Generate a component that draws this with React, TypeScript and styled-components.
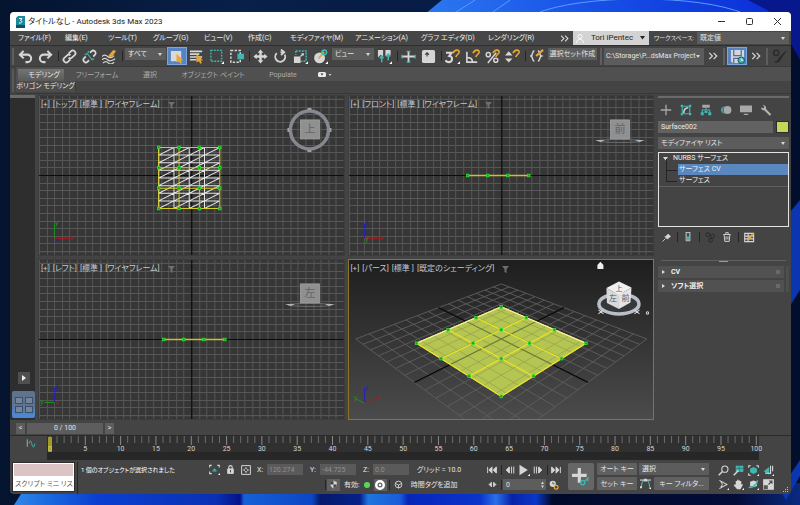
import React from "react";
import styled, { createGlobalStyle, css } from "styled-components";

const GlobalStyle = createGlobalStyle`
  * { box-sizing: border-box; }
  html, body { margin: 0; padding: 0; background: #03102a; }
  body, button, input, select {
    font-family: Roboto, "Noto Sans CJK JP", sans-serif;
    font-size: 7px;
    line-height: 12px;
    font-feature-settings: "palt";
    color: #e4e4e4;
  }
  button { padding: 0; border: 0; background: none; white-space: nowrap; }
  input, select { border: 0; border-radius: 0; margin: 0; outline: none; min-width: 0; }
`;

const TEAL = "#3fb8b4";
const LIGHT = "#d6d6d6";
const GOLD = "#e8a735";

/* ---------- shell ---------- */

const Desktop = styled.div`
  position: relative;
  min-height: 100vh;
  display: flex;
  padding: 12px 9px 11px 10px;
  overflow: hidden;
`;

const WallpaperSvg = styled.svg`
  position: absolute;
  inset: 0;
  width: 100%;
  height: 100%;
`;

const AppWindow = styled.main`
  position: relative;
  flex: 1;
  min-width: 0;
  display: flex;
  flex-direction: column;
  background: #444444;
  border-radius: 4px;
  overflow: hidden;
`;

const TitleBar = styled.header`
  display: flex;
  align-items: center;
  height: 19px;
  padding-left: 5px;
  background: #ffffff;
`;

const Title = styled.h1`
  flex: 1;
  margin: 0 0 0 2px;
  font-size: 8px;
  font-weight: 400;
  color: #222222;
`;

const CaptionButton = styled.button`
  display: grid;
  place-items: center;
  width: 28px;
  height: 19px;
`;

const MenuBar = styled.nav`
  display: flex;
  align-items: center;
  height: 14px;
  padding: 0 2px 0 8px;
  background: #464646;
`;

const MenuList = styled.div`
  flex: 1;
  display: grid;
  grid-template-columns: 47px 43px 45px 51px 44px 42px 65px 66px 67px 1fr;
`;

const MenuButton = styled.button`
  text-align: left;
  color: #ececec;
`;

const MoreButton = styled.button`
  display: grid;
  place-items: center;
  width: 18px;
  height: 14px;
`;

const UserButton = styled.button`
  display: flex;
  align-items: center;
  justify-content: space-between;
  width: 76px;
  height: 14px;
  padding: 0 4px 0 3px;
  background: #d3d3d3;
  color: #1c1c1c;
  font-size: 8px;
`;

const WorkspaceLabel = styled.label`
  width: 48px;
  padding-left: 5px;
  white-space: nowrap;
  font-size: 6px;
`;

const SelectWrap = styled.span<{ $w?: number; $h?: number }>`
  position: relative;
  display: flex;
  ${(p) => (p.$w ? css`width: ${p.$w}px;` : css`flex: 1;`)}
  height: ${(p) => p.$h ?? 12}px;
  &::after {
    content: "";
    position: absolute;
    right: 4px;
    top: calc(50% - 1px);
    border: 2px solid transparent;
    border-top: 3px solid #d8d8d8;
    border-bottom: 0;
    pointer-events: none;
  }
`;

const Select = styled.select<{ $dense?: boolean }>`
  appearance: none;
  width: 100%;
  height: 100%;
  padding: ${(p) => (p.$dense ? "0 0 0 2px" : "0 8px 0 3px")};
  background: #5c5c5c;
  line-height: 10px;
`;

/* ---------- toolbar ---------- */

const Toolbar = styled.div`
  display: flex;
  align-items: center;
  height: 21px;
  padding: 0 1px 0 2px;
  background: #444444;
  border-top: 1px solid #2f2f2f;
`;

const Grip = styled.span`
  width: 2px;
  height: 17px;
  margin-right: 2px;
  background: #5e5e5e;
`;

const ToolButton = styled.button<{ $active?: boolean }>`
  display: grid;
  place-items: center;
  flex: none;
  width: 20px;
  height: 18px;
  ${(p) =>
    p.$active &&
    css`
      background: #5583c4;
      border: 1px solid #79a6e0;
    `}
`;

const Separator = styled.span`
  flex: none;
  width: 1px;
  height: 10px;
  margin: 0 1px 0 2px;
  background: #252525;
`;

const SectionGrip = styled.span`
  flex: none;
  width: 2px;
  height: 17px;
  margin: 0 2px;
  background: #5e5e5e;
`;

const ToolSlot = styled.span`
  display: flex;
  align-self: flex-start;
  margin: 2px 1px 0;
`;

const SetButton = styled.button`
  width: 49px;
  height: 12px;
  background: #5e5e5e;
`;

const Spacer = styled.span`
  flex: 1;
`;

/* ---------- ribbon ---------- */

const Ribbon = styled.div`
  display: grid;
  grid-template-columns: 6px 1fr;
  grid-template-rows: 14px 13px;
  height: 29px;
  border-top: 1px solid #3a3a3a;
`;

const RibbonGrip = styled.span`
  grid-row: 1 / 3;
  margin: 2px 2px 2px 2px;
  background: #5a5a5a;
`;

const RibbonTabs = styled.div`
  display: grid;
  grid-template-columns: 48px 66px 40px 86px 54px 1fr;
  align-items: end;
  background: #505050;
`;

const RibbonTab = styled.button<{ $active?: boolean }>`
  height: 12px;
  color: #ababab;
  ${(p) =>
    p.$active &&
    css`
      margin-left: 2px;
      padding-left: 6px;
      background: linear-gradient(#747474, #5a5a5a);
      color: #e4e4e4;
    `}
`;

const RibbonToggle = styled.button`
  display: flex;
  align-items: center;
  height: 12px;
  padding-left: 8px;
`;

const RibbonPanel = styled.div`
  display: flex;
  background: #444444;
  border-bottom: 1px solid #383838;
`;

const RibbonPanelButton = styled.button`
  width: 60px;
  height: 11px;
  line-height: 11px;
  background: #4c4c4c;
  border-right: 1px solid #3a3a3a;
`;

/* ---------- work area ---------- */

const WorkArea = styled.div`
  flex: 1;
  min-height: 0;
  display: flex;
`;

const LeftStrip = styled.aside`
  display: flex;
  flex-direction: column;
  align-items: center;
  justify-content: flex-end;
  gap: 7px;
  width: 25px;
  margin-right: 3px;
  padding: 0 0 2px 2px;
  background: #2e2e2e;
  border-top: 3px solid #6a6a6a;
`;

const ExpandButton = styled.button`
  display: grid;
  place-items: center;
  width: 12px;
  height: 12px;
  background: #4f4f4f;
`;

const LayoutButton = styled.button`
  display: grid;
  grid-template-columns: 8px 8px;
  grid-template-rows: 7px 7px;
  place-content: center;
  gap: 2px;
  width: 23px;
  height: 27px;
  background: linear-gradient(#5d7390 50%, #4a88d4 90%);
  border-radius: 2px;
`;

const LayoutCell = styled.span`
  background: #74859a;
  border: 1px solid #3c4f68;
`;

const Viewports = styled.section`
  flex: 1;
  min-width: 0;
  display: grid;
  grid-template-columns: 1fr 1fr;
  grid-template-rows: 1fr 1fr;
  gap: 3px;
`;

const Viewport = styled.div<{ $active?: boolean }>`
  position: relative;
  min-height: 0;
  overflow: hidden;
  background: ${(p) => (p.$active ? "linear-gradient(#1e1e1e, #4b4b4b)" : "#363636")};
  border: 1px solid ${(p) => (p.$active ? "#8f7424" : "#3c3c3c")};
`;

const Scene = styled.svg`
  position: absolute;
  inset: 0;
  width: 100%;
  height: 100%;
`;

const ViewLabel = styled.div`
  position: relative;
  display: flex;
  align-items: center;
  gap: 3px;
  padding: 3px 0 0 2px;
`;

const ViewLabelButton = styled.button`
  font-size: 8px;
  color: #c8c8c8;
`;

/* ---------- command panel ---------- */

const CommandPanel = styled.aside`
  flex: none;
  width: 137px;
  display: flex;
  flex-direction: column;
  padding: 1px 2px 0 4px;
`;

const PanelGrip = styled.span`
  height: 2px;
  background: #6a6a6a;
`;

const PanelTabs = styled.div`
  display: flex;
  height: 22px;
  align-items: center;
  padding-top: 1px;
  margin-left: -2px;
`;

const NameRow = styled.div`
  display: flex;
  gap: 3px;
  height: 12px;
  margin-top: 1px;
`;

const NameInput = styled.input`
  flex: 1;
  padding: 0 3px;
  background: #626262;
  color: #ececec;
`;

const ColorSwatch = styled.button`
  width: 13px;
  background: #c3d758;
  border: 1px solid #2d2d2d;
`;

const ModifierList = styled.div`
  display: flex;
  margin: 4px 0 3px;
`;

const Stack = styled.ul`
  height: 75px;
  margin: 0;
  padding: 0;
  list-style: none;
  border: 1px solid #e4e4e4;
`;

const StackRow = styled.li<{ $selected?: boolean; $child?: boolean }>`
  display: flex;
  align-items: center;
  gap: 5px;
  height: 11px;
  line-height: 11px;
  margin-left: ${(p) => (p.$child ? 19 : 0)}px;
  padding-left: ${(p) => (p.$child ? 1 : 4)}px;
  color: #f0f0f0;
  background: ${(p) => (p.$selected ? "#5b87bf" : "transparent")};
  position: relative;
  ${(p) =>
    p.$child &&
    css`
      &::before {
        content: "";
        position: absolute;
        left: -12px;
        top: -5px;
        width: 10px;
        height: 11px;
        border-left: 1px solid #242424;
        border-bottom: 1px solid #242424;
      }
    `}
`;

const StackEnd = styled.li`
  border-top: 1px solid #606060;
`;

const StackTools = styled.div`
  display: flex;
  align-items: center;
  gap: 1px;
  height: 20px;
`;

const StackTool = styled.button`
  display: grid;
  place-items: center;
  width: 16px;
  height: 14px;
`;

const PanelDivider = styled.div`
  display: flex;
  justify-content: center;
  margin: 13px 3px 4px;
  border-top: 1px solid #606060;
  &::after {
    content: "";
    width: 9px;
    height: 1px;
    background: #9a9a9a;
  }
`;

const Rollouts = styled.div`
  display: flex;
  flex-direction: column;
  gap: 2px;
  padding-right: 2px;
  border-right: 3px solid #4e4e4e;
`;

const Rollout = styled.button`
  display: flex;
  align-items: center;
  gap: 6px;
  height: 12px;
  padding: 0 4px;
  background: #515151;
  font-weight: 700;
  color: #f0f0f0;
  &::after {
    content: "";
    width: 4px;
    height: 4px;
    margin-left: auto;
    background: #696969;
  }
`;

/* ---------- time line ---------- */

const TrackBar = styled.div`
  display: flex;
  align-items: center;
  gap: 2px;
  height: 15px;
  padding: 1px 0 0 6px;
`;

const TrackButton = styled.button<{ $w: number }>`
  width: ${(p) => p.$w}px;
  height: 11px;
  line-height: 11px;
  background: #5d5d5d;
`;

const Timeline = styled.div`
  display: flex;
  height: 25px;
  padding-left: 4px;
  border-top: 1px solid #2a2a2a;
`;

const CurveButton = styled.button`
  display: grid;
  place-items: center;
  width: 33px;
  height: 13px;
`;

const Ruler = styled.div`
  flex: 1;
  margin-right: 32px;
  background: linear-gradient(#303030 65%, #272727 65%);
`;

const RulerSvg = styled.svg`
  display: block;
  width: 100%;
  height: 24px;
  overflow: visible;
`;

/* ---------- status bar ---------- */

const StatusBar = styled.footer`
  display: flex;
  height: 34px;
  padding: 2px 2px 0;
`;

const ScriptBox = styled.div`
  display: grid;
  grid-template-rows: 14px 14px;
  width: 63px;
  height: 30px;
  border: 1px solid #2d2d2d;
  margin-right: 2px;
`;

const ScriptInput = styled.input<{ $macro?: boolean }>`
  width: 100%;
  padding: 0 0 0 1px;
  background: ${(p) => (p.$macro ? "#dcc3c6" : "#ffffff")};
  color: #5a5a5a;
  border: 1px solid #ffffff;
`;

const StatusMiddle = styled.div`
  flex: 1;
  display: grid;
  grid-template-rows: 15px 15px;
  padding-left: 3px;
  border-left: 1px solid #262626;
`;

const StatusRow = styled.div<{ $end?: boolean }>`
  display: flex;
  align-items: center;
  white-space: nowrap;
  ${(p) => p.$end && css`padding-left: 242px;`}
`;

const Message = styled.span`
  width: 125px;
  font-size: 6px;
  color: #ffffff;
`;

const StatusIcon = styled.button<{ $boxed?: boolean; $w?: number }>`
  display: grid;
  place-items: center;
  flex: none;
  width: ${(p) => p.$w ?? 16}px;
  height: 12px;
  background: ${(p) => (p.$boxed ? "#606060" : "transparent")};
`;

const Coord = styled.label`
  display: flex;
  align-items: center;
  justify-content: space-between;
  width: 46px;
  margin-left: 7px;
  &:first-of-type { margin-left: 3px; }
`;

const CoordInput = styled.input`
  width: 36px;
  height: 11px;
  padding: 0 2px;
  background: #5a5a5a;
  color: #909090;
`;

const SmallText = styled.span`
  margin: 0 4px;
`;

const GridText = styled.span`
  margin-left: 8px;
`;

const GreenDot = styled.span`
  width: 6px;
  height: 6px;
  margin-right: 4px;
  border-radius: 50%;
  background: #57d957;
`;

const Playback = styled.div`
  display: grid;
  grid-template-rows: 15px 15px;
  width: 79px;
`;

const PlaybackRow = styled.div`
  display: flex;
  align-items: center;
`;

const FrameBox = styled.span`
  display: flex;
  align-items: center;
  width: 43px;
  height: 11px;
  margin-right: 1px;
  padding-right: 2px;
  background: #5d5d5d;
`;

const FrameInput = styled.input`
  flex: 1;
  height: 11px;
  padding: 0 3px;
  background: transparent;
`;

const AddKeyButton = styled.button`
  display: grid;
  place-items: center;
  width: 26px;
  height: 27px;
  margin: 1px 3px 0 4px;
  background: #666666;
  border-radius: 2px;
`;

const KeyGrid = styled.div`
  display: grid;
  grid-template-columns: 40px 13px 55px;
  grid-template-rows: 12px 13px;
  gap: 2px;
  margin-top: 1px;
`;

const KeyButton = styled.button`
  background: #606060;
  border-radius: 1px;
`;

const KeySelect = styled.div`
  grid-column: 2 / 4;
  display: flex;
`;

const NavGrid = styled.div`
  display: grid;
  grid-template-columns: repeat(4, 14px);
  grid-template-rows: 14px 14px;
  column-gap: 1px;
  margin: 1px 0 0 7px;
`;

const NavButton = styled.button`
  display: grid;
  place-items: center;
`;

const ResizeGrip = styled.div`
  align-self: flex-end;
  display: grid;
  width: 14px;
  justify-content: end;
  padding-bottom: 1px;
`;

/* ---------- icons ---------- */

type IconProps = { size?: number; children: React.ReactNode };
const Icon = ({ size = 16, children }: IconProps) => (
  <svg width={size} height={size} viewBox="0 0 16 16" fill="none" stroke={LIGHT} strokeWidth="1.6" aria-hidden="true">
    {children}
  </svg>
);
const Corner = () => <path d="M16 13v3h-3z" fill="#fff" stroke="none" />;
const Cursor = () => <path d="M8 5l7 7-2.500.2 1.300 2.800-1.900.8-1.300-2.800L8 14.500z" fill={GOLD} stroke="none" />;
const Magnet = () => <path d="M8.500 4.500c2-4.500 7-4 6.500-1 0 2-2.500 2-3.500 5" stroke={GOLD} strokeWidth="1.700" />;
const Chevrons = ({ size = 10 }: { size?: number }) => (
  <Icon size={size}>
    <path d="M2 3l5 5-5 5M9 3l5 5-5 5" strokeWidth="2" />
  </Icon>
);
const Triangle = ({ color = LIGHT }: { color?: string }) => (
  <svg width="5" height="4" viewBox="0 0 5 4" aria-hidden="true">
    <path d="M0 0h5L2.500 3.500z" fill={color} />
  </svg>
);

const LinkShape = () => (
  <g strokeWidth="1.900">
    <path d="M7 5l2.500-2.500a2.600 2.600 0 014 4L10.500 9.300a2.600 2.600 0 01-3.500 0" />
    <path d="M9 11l-2.500 2.500a2.600 2.600 0 01-4-4L5.500 6.700a2.600 2.600 0 013.500 0" />
  </g>
);

const icons = {
  undo: <path d="M6 2L2 6l4 4M2.500 6H10a4 4 0 010 8H8" strokeWidth="2.200" />,
  redo: <path d="M10 2l4 4-4 4M13.500 6H6a4 4 0 000 8h2" strokeWidth="2.200" />,
  link: <LinkShape />,
  unlink: (
    <>
      <path d="M8.500 4l1.500-1.500a2.600 2.600 0 013.700 3.800L12 8M7.500 12L6 13.500a2.600 2.600 0 01-3.700-3.800L4 8" strokeWidth="1.900" />
      <path d="M5 4l6 8M3 5.500l2 .5M11 10.500l2 .5M6.500 2l.5 2" stroke={TEAL} strokeWidth="1.200" />
    </>
  ),
  bind: (
    <>
      <path d="M0 8c2-2 4-2 6 0s5 1 7-1M0 11.500c2-2 4-2 6 0s5 1 8-1M1 15c2-2 4-2 6 0s4 1 6-1" strokeWidth="1.300" />
      <path d="M7 7l5-6 3 1-4 6-4 1z" fill={GOLD} stroke="none" />
    </>
  ),
  select: (
    <>
      <path d="M2 2h11v11H2z" fill="#d9d9d9" stroke="none" />
      <Cursor />
    </>
  ),
  byName: (
    <>
      <path d="M1 2.500h13M1 5.500h10M1 8.500h13M1 11.500h7" strokeWidth="1.700" />
      <Cursor />
    </>
  ),
  region: (
    <>
      <path d="M2 1.500h11.500V13H2z" stroke={TEAL} strokeDasharray="2 1.200" strokeWidth="1.500" />
      <Corner />
    </>
  ),
  crossing: (
    <>
      <path d="M2 1.500h10V14H2z" strokeDasharray="2.500 1.500" />
      <path d="M9 5h7v6H9z" fill={TEAL} stroke="none" />
    </>
  ),
  move: (
    <path
      d="M8 .5l3 3.500H9.300v2.700H12V5l3.500 3-3.500 3V9.300H9.300V12H11l-3 3.500L5 12h1.700V9.300H4V11L.5 8 4 5v1.700h2.700V4H5z"
      fill={LIGHT}
      stroke="none"
    />
  ),
  rotate: <path d="M4 4.500A5.300 5.300 0 1012.500 6M8.500.5L12 3.500 8.500 6.500M12 3.500H8" strokeWidth="1.900" />,
  scale: (
    <>
      <path d="M3 2h11v11" stroke={TEAL} strokeDasharray="2 1.200" />
      <path d="M3 2v4M8 13h6" stroke={TEAL} strokeDasharray="2 1.200" />
      <path d="M1 8h7v7H1z" fill={LIGHT} stroke="none" />
      <path d="M8 8l3-3M9 5h2v2" strokeWidth="1.200" />
      <Corner />
    </>
  ),
  place: (
    <>
      <circle cx="7" cy="9.500" r="5.800" fill={LIGHT} stroke="none" />
      <path d="M6 10l6-7" stroke={GOLD} strokeWidth="2" />
      <circle cx="12" cy="3.500" r="2.500" stroke={TEAL} />
      <Corner />
    </>
  ),
  pivot: (
    <>
      <path d="M1 1h5.500v7L4 6 1 9zM9 1h5.500v6L12 5 9 8z" fill={LIGHT} stroke="none" />
      <path d="M5 14V8M3 10l2-2.500L7 10M12 12V6M10 8l2-2.500L14 8" stroke={TEAL} />
      <Corner />
    </>
  ),
  manipulate: (
    <>
      <path d="M1 8h14M8 2v12" strokeWidth="2" />
      <path d="M6 2.500h4M6 14h4M1 6v4M15 6v4" stroke={TEAL} strokeWidth="1.400" />
    </>
  ),
  keyboard: (
    <>
      <rect x="1" y="1" width="14" height="14" rx="2" fill={LIGHT} stroke="none" />
      <path d="M6.500 8V4M4.500 6l2-2 2 2" stroke="#3a3a3a" strokeWidth="1.200" />
    </>
  ),
  snap: (
    <>
      <path d="M1 4h6L4.500 7.500C9 8 8 14 4 14c-2 0-3-1-3.500-2" strokeWidth="2.200" />
      <Magnet />
      <Corner />
    </>
  ),
  angle: (
    <>
      <path d="M2 3v11h11M2 9c4 0 6 2 6 5" strokeWidth="1.700" />
      <Magnet />
    </>
  ),
  percent: (
    <>
      <path d="M12 4L3 15" />
      <circle cx="3.500" cy="6" r="2.200" />
      <circle cx="11.500" cy="12" r="2.200" />
      <Magnet />
    </>
  ),
  spinner: (
    <>
      <path d="M0 7l4-4.500L8 7zM0 10l4 4.500L8 10z" fill={LIGHT} stroke="none" />
      <Magnet />
    </>
  ),
  namedSets: (
    <>
      <path d="M5 2C2 2 4 7 1 8c3 1 1 6 4 6M9 2c3 0 1 5 4 6-3 1-1 6-4 6" strokeWidth="1.700" />
      <path d="M7 8l8-7" stroke={GOLD} strokeWidth="2.400" />
    </>
  ),
  save: (
    <>
      <path d="M1 1h14v14H3l-2-2z" fill={LIGHT} stroke="none" />
      <path d="M4 1v6h8V1M4 15v-5h5" stroke="#4b6f9f" strokeWidth="1.300" />
      <circle cx="12" cy="12" r="3.500" fill={TEAL} stroke="#1d4c57" strokeWidth="1" />
      <path d="M12 10v2h2" stroke="#fff" strokeWidth="1" />
    </>
  ),
  brush: (
    <g stroke="#2b2b2b">
      <circle cx="4.500" cy="4" r="2.800" />
      <path d="M3 14c4 0 3-3 5-5l7-7-6 9c-1 3-3 3-6 3z" fill="#2b2b2b" strokeWidth="1" />
    </g>
  ),
  create: <path d="M8 1v14M1 8h14" stroke="#a8a8a8" strokeWidth="1.800" />,
  modify: (
    <>
      <path d="M3 3h10v10H3z" stroke={TEAL} />
      <path d="M1 1h3v3H1zM12 1h3v3h-3zM1 12h3v3H1zM12 12h3v3h-3z" fill={TEAL} stroke="none" />
      <path d="M5 12c0-4 2-7 6-7" strokeWidth="2" />
    </>
  ),
  hierarchy: (
    <>
      <path d="M3 1h10v4H3z" fill="#a8a8a8" stroke="none" />
      <path d="M8 5v3M3 12V8h10v4" stroke={TEAL} strokeWidth="1.400" />
      <path d="M1 11h4v4H1zM11 11h4v4h-4zM6 9h4v3H6z" fill={TEAL} stroke="none" />
    </>
  ),
  motion: (
    <>
      <path d="M6 3a6 6 0 000 10M3.500 4a6 6 0 000 8" stroke={TEAL} strokeWidth="1.200" />
      <circle cx="10" cy="8" r="5.200" fill="#a8a8a8" stroke="none" />
    </>
  ),
  display: <path d="M0 2h16v9H0zM5 13h6v1.500H5z" fill="#a8a8a8" stroke="none" />,
  utilities: (
    <path
      d="M1.500 4.500a4 4 0 004.500 4l7 7 2-2-7-7a4 4 0 00-4-5l2 2.500L4.500 5.500z"
      fill="#b4b4b4"
      stroke="none"
    />
  ),
  pin: <path d="M1 15l5-5M5 6l5 5M6 7l5-5 4 4-5 4z" fill={LIGHT} />,
  tube: (
    <>
      <path d="M4 1h8M5 2v12h6V2" strokeWidth="1.500" />
      <path d="M6 7h4v6H6z" fill={TEAL} stroke="none" />
    </>
  ),
  unique: (
    <g stroke="#2d2d2d">
      <circle cx="4" cy="4" r="2.800" />
      <circle cx="11" cy="6" r="2.800" />
      <circle cx="8" cy="12" r="2.800" />
    </g>
  ),
  trash: <path d="M2 4h12M6 3V1h4v2M3.500 5l1 10h7l1-10M6.500 7v5M9.500 7v5" strokeWidth="1.500" />,
  configure: (
    <>
      <path d="M1 2h13v12H1zM1 6h13M1 10h13M6 2v12" strokeWidth="1.600" />
      <path d="M6 11l8-9" stroke={GOLD} strokeWidth="3" />
    </>
  ),
  track: (
    <>
      <path d="M2 2v12" stroke="#aaa" />
      <path d="M5 9c2-10 4 0 5 3s3 4 4-3" stroke={TEAL} />
    </>
  ),
  isolate: (
    <>
      <path d="M1 5V2h3M1 11v3h3M12 2h3v3" />
      <path d="M5 9l3-3 3 3z" fill={TEAL} stroke="none" />
      <path d="M5 10h6" stroke={TEAL} />
      <Corner />
    </>
  ),
  lock: (
    <>
      <path d="M3 7h10v8H3z" fill={LIGHT} />
      <path d="M5 7V4a3 3 0 016 0v3" strokeWidth="2" />
      <path d="M8 9v4" stroke="#333" />
    </>
  ),
  absolute: (
    <>
      <path d="M1 1h14v14H1z" />
      <path d="M8 3l2 3H6zM8 13l2-3H6zM3 8l3-2v4zM13 8l-3-2v4z" fill={LIGHT} stroke="none" />
    </>
  ),
  shield: (
    <>
      <path d="M8 1l6 3c0 6-2 9-6 11-4-2-6-5-6-11z" fill={LIGHT} stroke="none" />
      <path d="M8 1v7H2V4zM8 8h5c0 3-2 6-5 7z" fill="#444" stroke="none" />
    </>
  ),
  target: (
    <>
      <circle cx="8" cy="8" r="6" stroke="#fff" strokeWidth="4" />
      <circle cx="8" cy="8" r="2" fill="#fff" stroke="none" />
    </>
  ),
  tag: (
    <>
      <circle cx="8" cy="8" r="6" />
      <path d="M2 6l6 3 6-3M8 9v6" />
    </>
  ),
  first: <path d="M1 3v10M8 3L3 8l5 5zM15 3l-5 5 5 5z" fill={LIGHT} strokeWidth="1.500" />,
  prev: <path d="M7 3L2 8l5 5zM10.500 2.500v11M14 2.500v11" fill={LIGHT} />,
  play: (
    <>
      <path d="M2 1l11 7-11 7z" fill={LIGHT} stroke="none" />
      <Corner />
    </>
  ),
  next: <path d="M9 3l5 5-5 5zM2 2.500v11M5.500 2.500v11" fill={LIGHT} />,
  last: <path d="M15 3v10M8 3l5 5-5 5zM1 3l5 5-5 5z" fill={LIGHT} strokeWidth="1.500" />,
  keyMode: <path d="M6 4L2 8l4 4zM10 4l4 4-4 4z" fill={LIGHT} />,
  timeConfig: (
    <>
      <circle cx="6" cy="6" r="5" fill={LIGHT} stroke="none" />
      <path d="M6 3v3h3" stroke="#444" strokeWidth="1.200" />
      <circle cx="11.500" cy="11.500" r="3" stroke={GOLD} strokeWidth="2" />
    </>
  ),
  addKey: (
    <>
      <path d="M6.500 0v13M0 6.500h13" strokeWidth="2.800" />
      <circle cx="9.500" cy="13" r="1.800" stroke={TEAL} strokeWidth="1.200" />
      <path d="M11 12l4-3.500M13.500 10l1 1.500" stroke={TEAL} strokeWidth="1.200" />
    </>
  ),
  tangent: (
    <>
      <path d="M2 14C2 4 5 3 8 3s6 1 6 11" stroke={TEAL} />
      <path d="M0 3h16" />
      <path d="M6 1h4v4H6zM0 12h3v3H0z" fill={LIGHT} stroke="none" />
      <Corner />
    </>
  ),
  zoom: (
    <>
      <circle cx="10" cy="6" r="4.500" />
      <path d="M6.500 9.500L1 15" strokeWidth="2.200" />
    </>
  ),
  zoomAll: (
    <>
      <path d="M4 1h11v9H4z" fill={TEAL} stroke="none" />
      <path d="M9 1v9M4 5h11" stroke="#2d6e70" strokeWidth="1" />
      <path d="M8 8l-7 7" strokeWidth="2.200" />
    </>
  ),
  extents: (
    <>
      <path d="M1 4V1h3M12 1h3v3M1 12v3h3" />
      <path d="M8 3l5 2.500v5L8 13l-5-2.500v-5z" fill={TEAL} stroke="none" />
      <Corner />
    </>
  ),
  extentsAll: (
    <>
      <path d="M1 9l8-6v11z" fill={TEAL} stroke="none" />
      <path d="M11 1v12M14 1v8M3 12h8" />
      <Corner />
    </>
  ),
  fov: (
    <>
      <path d="M2 2l11 6-11 6M4 4c3 3 3 5 0 8" strokeWidth="1.500" />
      <Corner />
    </>
  ),
  pan: (
    <>
      <path d="M4 8V3h2V1h2v1h2v1h2v5l2-1v2l-3 6H6L1 9l1-1z" fill={LIGHT} stroke="none" />
      <Corner />
    </>
  ),
  orbit: (
    <>
      <path d="M8 2l5 2v6l-5 2-5-2V4z" fill={LIGHT} stroke="none" />
      <path d="M14 2C13 9 6 13 1 12" stroke={TEAL} strokeWidth="2.200" />
      <Corner />
    </>
  ),
  maximize: (
    <>
      <path d="M1 1h14v14H1z" fill={LIGHT} />
      <path d="M1 9h6v6H1z" fill="#555" stroke="none" />
      <path d="M8 8l5-5M9 3h4v4" stroke="#444" />
    </>
  ),
};

type IconName = keyof typeof icons;

const Tool = ({ name, label, active, size }: { name: IconName; label: string; active?: boolean; size?: number }) => (
  <ToolButton aria-label={label} $active={active}>
    <Icon size={size ?? 15}>{icons[name]}</Icon>
  </ToolButton>
);

/* ---------- wallpaper ---------- */

const bottomStops: [number, string][] = [
  [0.02, "#2f86e8"], [0.06, "#1a6ae0"], [0.12, "#0b3fd0"], [0.27, "#0a30b4"], [0.3, "#04128a"],
  [0.305, "#1560d8"], [0.39, "#0c46c4"], [0.4, "#051a6a"], [0.45, "#06208a"], [0.46, "#1f74e0"],
  [0.5, "#1a5cd8"], [0.51, "#0726b8"], [0.6, "#0a34cc"], [0.62, "#2a70e8"], [0.64, "#0722a8"],
  [0.67, "#0a38c8"], [0.69, "#020a2a"], [0.92, "#030c38"], [1, "#0a2a80"],
];

const Wallpaper = () => (
  <WallpaperSvg viewBox="0 0 800 505" preserveAspectRatio="none" aria-hidden="true">
    <defs>
      <linearGradient id="wTop" x1="0" x2="1">
        <stop offset="0" stopColor="#04142f" />
        <stop offset="0.300" stopColor="#08204a" />
        <stop offset="0.550" stopColor="#061b45" />
        <stop offset="1" stopColor="#030d2c" />
      </linearGradient>
      <linearGradient id="wPetal" x1="0" x2="1">
        <stop offset="0" stopColor="#2c78f0" />
        <stop offset="0.400" stopColor="#1a55e8" />
        <stop offset="1" stopColor="#0a2fd8" />
      </linearGradient>
      <linearGradient id="wBottom" gradientUnits="userSpaceOnUse" x1="0" x2="800">
        {bottomStops.map(([o, c]) => <stop key={o} offset={o} stopColor={c} />)}
      </linearGradient>
    </defs>
    <path d="M0 0h800v505H0z" fill="url(#wTop)" />
    <path d="M730 0h70v60l-20-36-50-10z" fill="#06188c" />
    <path d="M425 14L442 0h306l26 14z" fill="url(#wPetal)" />
    <path d="M453 14l22-14M490 14l20-14M535 14C580-6 700-6 745 14" stroke="#5a9cff" fill="none" />
    <path d="M14 505l14-22h772v22z" fill="url(#wBottom)" />
    <path d="M790 212l10-12v90l-10 16zM780 490l20-30v16l-14 24z" fill="#0b36b0" />
  </WallpaperSvg>
);

/* ---------- viewport drawings ---------- */

const W = 304;
const H = 159;
const CX = 152;
const CY = 79;
const STEP = 7.6;

const GridLines = () => {
  const lines: React.ReactNode[] = [];
  for (let k = -20; k <= 20; k++) {
    if (k === 0) continue;
    const x = Math.round(CX + k * STEP) + 0.5;
    lines.push(<path key={`v${k}`} d={`M${x} 0V${H}`} />);
    const y = Math.round(CY + k * STEP) + 0.5;
    if (k > -11 && k < 11) lines.push(<path key={`h${k}`} d={`M0 ${y}H${W}`} />);
  }
  return (
    <>
      <g stroke="#565656">{lines}</g>
      <path d={`M${CX + 0.5} 0V${H}M0 ${CY + 0.5}H${W}`} stroke="#0c0c0c" strokeWidth="1.200" />
    </>
  );
};

const Handle = ({ x, y }: { x: number; y: number }) => (
  <rect x={x - 1.3} y={y - 1.3} width="2.600" height="2.600" fill="#1f9a1f" stroke="#32dc32" strokeWidth="0.800" />
);

const Tripod = ({ up, side, origin, left }: { up: [string, string]; side: [string, string]; origin: [string, string]; left?: boolean }) => {
  const dir = left ? -1 : 1;
  return (
    <g fontSize="7" fontFamily="Liberation Sans, sans-serif">
      <path d="M15.500 142.500v-15" stroke={up[1]} />
      <path d={`M15.500 142.500h${(left ? 10 : 16) * dir}`} stroke={side[1]} />
      <text x="16" y="129" fill={up[1]}>{up[0]}</text>
      <text x={left ? 1 : 31} y="144" fill={side[1]}>{side[0]}</text>
      <text x="16" y="145" fill={origin[1]}>{origin[0]}</text>
    </g>
  );
};

const CubeFace = ({ x, y, face }: { x: number; y: number; face: string }) => (
  <g>
    <rect x={x} y={y} width="19" height="19" fill="#909090" stroke="#a2a2a2" strokeWidth="0.800" />
    <text x={x + 9.5} y={y + 13} fontSize="11" textAnchor="middle" fill="#5e636c">{face}</text>
  </g>
);

const FlatRing = ({ cx, cy }: { cx: number; cy: number }) => (
  <g>
    <ellipse cx={cx} cy={cy} rx="22" ry="1.500" fill="none" stroke="#75787c" strokeWidth="0.800" />
    <path d={`M${cx - 25} ${cy - 1}l10 0-4 2zM${cx + 25} ${cy - 1}l-10 0 4 2z`} fill="#b4b7ba" />
  </g>
);

const BLUE = "#2323b4";
const RED = "#a01f1f";
const GREEN = "#1f8f1f";

const TopScene = () => {
  const x0 = 119.5, y0 = 51.5, s = 61;
  const mesh: string[] = [];
  for (let i = 0; i < 4; i++) {
    mesh.push(`M${x0 + (i * s) / 4} ${y0}v${s}`);
    for (let j = 0; j < 8; j++) {
      mesh.push(`M${x0 + (i * s) / 4} ${y0 + ((j + 1) * s) / 8}l${s / 4} ${-s / 8}`);
    }
  }
  for (let j = 1; j < 8; j++) mesh.push(`M${x0} ${y0 + (j * s) / 8}h${s}`);
  const t = [0, 1, 2, 3].map((n) => (n * s) / 3);
  return (
    <Scene viewBox={`0 0 ${W} ${H}`} preserveAspectRatio="xMidYMid slice">
      <GridLines />
      <path d={mesh.join("")} stroke="#e6e6e6" fill="none" />
      <path d={t.map((v) => `M${x0 + v} ${y0}v${s}M${x0} ${y0 + v}h${s}`).join("")} stroke="#d8cc22" fill="none" />
      {t.flatMap((a) => t.map((b) => <Handle key={`${a}-${b}`} x={x0 + a} y={y0 + b} />))}
      <circle cx="270" cy="34" r="19" fill="none" stroke="#85888f" strokeWidth="3.500" />
      <path d="M268 13h4M268 55h4M249 32v4M291 32v4" stroke="#a0a0a0" strokeWidth="2" />
      <CubeFace x={261} y={24} face="上" />
      <Tripod up={["y", GREEN]} side={["x", RED]} origin={["z", BLUE]} />
    </Scene>
  );
};

const SideScene = ({ start, face, left }: { start: number; face: string; left?: boolean }) => (
  <Scene viewBox={`0 0 ${W} ${H}`} preserveAspectRatio="xMidYMid slice">
    <GridLines />
    <path d={`M${start} 79.500h61`} stroke="#c9c02a" strokeWidth="1.600" />
    {[0, 20, 40, 61].map((d) => <Handle key={d} x={start + d} y={79.5} />)}
    <FlatRing cx={270.5} cy={45} />
    <CubeFace x={261} y={24} face={face} />
    <Tripod
      left={left}
      up={["z", BLUE]}
      side={left ? ["y", GREEN] : ["x", RED]}
      origin={left ? ["x", RED] : ["y", GREEN]}
    />
  </Scene>
);

/* Projects a ground-plane point (grid units) to viewport coordinates. */
const project = (x: number, y: number): [number, number] => {
  const d = (x + y) / 14;
  const s = (x - y) / 14;
  const w = 1 + 0.3224 * d;
  return [152 + (145.3 * s) / w, 79 - (72.7 * d) / w];
};
const seg = (x1: number, y1: number, x2: number, y2: number) => {
  const [a, b] = project(x1, y1);
  const [c, d] = project(x2, y2);
  return `M${a.toFixed(1)} ${b.toFixed(1)}L${c.toFixed(1)} ${d.toFixed(1)}`;
};

const PerspectiveScene = () => {
  const ground: string[] = [];
  const over: string[] = [];
  const X0 = -4.4, X1 = 3.6, Y0 = -4.4, Y1 = 3.6;
  for (let k = -7; k <= 7; k++) {
    ground.push(seg(k, -7, k, 7), seg(-7, k, 7, k));
    if (k > -5 && k < 4) over.push(seg(k, Y0, k, Y1), seg(X0, k, X1, k));
  }
  const corners = [project(X0, Y0), project(X1, Y0), project(X1, Y1), project(X0, Y1)];
  const t = [0, 1, 2, 3].map((n) => (n * 8) / 3);
  return (
    <Scene viewBox={`0 0 ${W} ${H}`} preserveAspectRatio="xMidYMid slice">
      <path d={ground.join("")} stroke="#5f5f5f" strokeWidth="0.900" />
      <path d={seg(0, -7, 0, 7) + seg(-7, 0, 7, 0)} stroke="#080808" strokeWidth="1.200" />
      <polygon points={corners.map((c) => c.join(",")).join(" ")} fill="#b5c552" stroke="#d9d06a" />
      <path d={over.join("")} stroke="#98a44b" strokeWidth="0.800" />
      <path d={seg(0, Y0, 0, Y1) + seg(X0, 0, X1, 0)} stroke="#6b7738" />
      <path
        d={t.map((v) => seg(X0 + v, Y0, X0 + v, Y1) + seg(X0, Y0 + v, X1, Y0 + v)).join("")}
        stroke="#ece61e"
        strokeWidth="1.100"
      />
      <path d={seg(X0, Y1, X1, Y1) + seg(X1, Y0, X1, Y1)} stroke="#f2f0b8" />
      {t.flatMap((a) =>
        t.map((b) => {
          const [x, y] = project(X0 + a, Y0 + b);
          return <Handle key={`${a}-${b}`} x={x} y={y} />;
        }),
      )}
      <path d="M248 5l3-3 3 3v4h-6z" fill="#efefef" />
      <ellipse cx="269.500" cy="44" rx="20" ry="10" fill="#37383a" stroke="#b9bfc8" strokeWidth="3.500" />
      <path d="M249 50l5 4M254 50l-5 4M285 50l5 4M290 50l-5 4" stroke="#d8d8d8" />
      <path d="M269.500 21.500L282 27.500 269.500 35 257 28z" fill="#f0f0f0" />
      <path d="M257 28l12.500 7V49L257.500 43z" fill="#d9d9d9" />
      <path d="M282 27.500L269.500 35V49L281 42.500z" fill="#e4e4e4" />
      <g fontSize="8" fill="#555a62" textAnchor="middle">
        <text x="269.500" y="31" fontSize="7">上</text>
        <text x="263.500" y="41">左</text>
        <text x="276" y="41">前</text>
      </g>
      <circle cx="298" cy="53" r="1.200" fill="none" stroke="#d8d8d8" />
      <g fontSize="7" fontFamily="Liberation Sans, sans-serif" fill="none">
        <path d="M15.500 143v-15" stroke={BLUE} />
        <path d="M15.500 143l12-5" stroke={RED} />
        <path d="M15.500 143l-8-4" stroke={GREEN} />
        <text x="16" y="130" fill={BLUE}>z</text>
        <text x="28" y="139" fill={RED}>x</text>
        <text x="5" y="140" fill={GREEN}>y</text>
      </g>
    </Scene>
  );
};

const views: { name: string; mode: string; scene: React.ReactNode; active?: boolean }[] = [
  { name: "トップ", mode: "ワイヤフレーム", scene: <TopScene /> },
  { name: "フロント", mode: "ワイヤフレーム", scene: <SideScene start={118.5} face="前" /> },
  { name: "レフト", mode: "ワイヤフレーム", scene: <SideScene start={124.5} face="左" left /> },
  { name: "パース", mode: "既定のシェーディング", scene: <PerspectiveScene />, active: true },
];

const menus = [
  "ファイル(F)", "編集(E)", "ツール(T)", "グループ(G)", "ビュー(V)", "作成(C)",
  "モディファイヤ(M)", "アニメーション(A)", "グラフ エディタ(D)", "レンダリング(R)",
];

const TimeRuler = () => {
  const frames = Array.from({ length: 101 }, (_, i) => i);
  const at = (f: number) => `${0.42 + f * 0.992}%`;
  return (
    <RulerSvg aria-hidden="true">
      {frames.map((f) => (
        <line key={f} x1={at(f)} x2={at(f)} y1="0" y2={f % 5 === 0 ? 9 : 7} stroke={f % 5 === 0 ? "#8a8a8a" : "#6c6c6c"} />
      ))}
      <rect x="1" y="1" width="4" height="15" fill="#a39a25" />
      {frames.filter((f) => f % 5 === 0).map((f) => (
        <text key={f} x={at(f)} y="15" fontSize="7" textAnchor="middle" fill={f === 0 ? "#e6dc5a" : "#d4d4d4"}>{f}</text>
      ))}
    </RulerSvg>
  );
};

export default function App() {
  return (
    <>
      <GlobalStyle />
      <Desktop>
        <Wallpaper />
        <AppWindow>
          <TitleBar>
            <svg width="11" height="12" viewBox="0 0 11 12" aria-hidden="true">
              <path d="M1 2l2-2h7v10l-1 2H1z" fill="#178a9c" />
              <path d="M1 9h9v3H1z" fill="#0d4f63" />
              <path d="M4 2.500h3L5.500 4.500c2 0 2 3-1.500 2.500" stroke="#fff" fill="none" />
            </svg>
            <Title>タイトルなし - Autodesk 3ds Max 2023</Title>
            <CaptionButton aria-label="最小化">
              <svg width="7" height="7"><path d="M0 3.500h7" stroke="#333" /></svg>
            </CaptionButton>
            <CaptionButton aria-label="最大化">
              <svg width="7" height="7"><rect x="0.500" y="0.500" width="6" height="6" rx="1" stroke="#333" fill="none" /></svg>
            </CaptionButton>
            <CaptionButton aria-label="閉じる">
              <svg width="7" height="7"><path d="M0 0l7 7M7 0L0 7" stroke="#333" /></svg>
            </CaptionButton>
          </TitleBar>

          <MenuBar>
            <MenuList>
              {menus.map((m) => <MenuButton key={m}>{m}</MenuButton>)}
            </MenuList>
            <MoreButton aria-label="その他のメニュー"><Chevrons size={9} /></MoreButton>
            <UserButton>
              <svg width="8" height="9" viewBox="0 0 8 9" aria-hidden="true">
                <circle cx="4" cy="2.500" r="2" fill="none" stroke="#fafafa" />
                <path d="M.5 9c0-5 7-5 7 0" fill="none" stroke="#fafafa" />
              </svg>
              Tori iPentec
              <Triangle color="#222" />
            </UserButton>
            <WorkspaceLabel htmlFor="workspace">ワークスペース:</WorkspaceLabel>
            <SelectWrap $w={92}>
              <Select id="workspace"><option>既定値</option></Select>
            </SelectWrap>
          </MenuBar>

          <Toolbar>
            <Grip />
            <Tool name="undo" label="元に戻す" />
            <Tool name="redo" label="やり直し" />
            <Separator />
            <Tool name="link" label="リンク" />
            <Tool name="unlink" label="リンク解除" />
            <Tool name="bind" label="スペース ワープにバインド" />
            <Separator />
            <ToolSlot>
              <SelectWrap $w={41}>
                <Select aria-label="選択フィルタ"><option>すべて</option></Select>
              </SelectWrap>
            </ToolSlot>
            <Tool name="select" label="オブジェクトを選択" active />
            <Tool name="byName" label="名前による選択" />
            <Tool name="region" label="矩形選択領域" />
            <Tool name="crossing" label="窓/交差" />
            <Separator />
            <Tool name="move" label="移動" />
            <Tool name="rotate" label="回転" />
            <Tool name="scale" label="スケール" />
            <Tool name="place" label="配置" />
            <ToolSlot>
              <SelectWrap $w={42}>
                <Select aria-label="参照座標系"><option>ビュー</option></Select>
              </SelectWrap>
            </ToolSlot>
            <Tool name="pivot" label="基点" />
            <Separator />
            <Tool name="manipulate" label="マニピュレート" />
            <Tool name="keyboard" label="キーボード ショートカット" />
            <Separator />
            <Tool name="snap" label="スナップ" />
            <Tool name="angle" label="角度スナップ" />
            <Tool name="percent" label="パーセント スナップ" />
            <Tool name="spinner" label="スピナー スナップ" />
            <Separator />
            <Tool name="namedSets" label="名前付き選択セット" size={14} />
            <ToolSlot><SetButton>選択セット作成</SetButton></ToolSlot>
            <SectionGrip />
            <SelectWrap $w={107} $h={17}>
              <Select $dense aria-label="プロジェクト"><option>C:\Storage\P...dsMax Project</option></Select>
            </SelectWrap>
            <MoreButton aria-label="その他"><Chevrons /></MoreButton>
            <SectionGrip />
            <Tool name="save" label="自動バックアップ" active />
            <MoreButton aria-label="その他"><Chevrons /></MoreButton>
            <Spacer />
            <SectionGrip />
            <Tool name="brush" label="ペイント" />
          </Toolbar>

          <Ribbon>
            <RibbonGrip />
            <RibbonTabs>
              <RibbonTab $active>モデリング</RibbonTab>
              <RibbonTab>フリーフォーム</RibbonTab>
              <RibbonTab>選択</RibbonTab>
              <RibbonTab>オブジェクト ペイント</RibbonTab>
              <RibbonTab>Populate</RibbonTab>
              <RibbonToggle aria-label="リボンの最小化">
                <svg width="14" height="6" viewBox="0 0 14 6">
                  <rect width="8" height="5" rx="1.500" fill="#ececec" />
                  <path d="M2.500 1.500h3L4 3.500z" fill="#333" />
                  <path d="M10.500 2h3l-1.500 2z" fill="#c8c8c8" />
                </svg>
              </RibbonToggle>
            </RibbonTabs>
            <RibbonPanel>
              <RibbonPanelButton>ポリゴン モデリング</RibbonPanelButton>
            </RibbonPanel>
          </Ribbon>

          <WorkArea>
            <LeftStrip>
              <ExpandButton aria-label="展開">
                <svg width="4" height="6"><path d="M0 0l4 3-4 3z" fill="#eee" /></svg>
              </ExpandButton>
              <LayoutButton aria-label="ビューポート レイアウト">
                <LayoutCell /><LayoutCell /><LayoutCell /><LayoutCell />
              </LayoutButton>
            </LeftStrip>

            <Viewports>
              {views.map((v) => (
                <Viewport key={v.name} $active={v.active}>
                  {v.scene}
                  <ViewLabel>
                    <ViewLabelButton>[+]</ViewLabelButton>
                    <ViewLabelButton>[{v.name}]</ViewLabelButton>
                    <ViewLabelButton>[標準 ]</ViewLabelButton>
                    <ViewLabelButton>[{v.mode}]</ViewLabelButton>
                    <svg width="12" height="7" viewBox="0 0 12 7" aria-hidden="true">
                      <path d="M5 0h7L9.500 3v4l-2-1V3z" fill="#6e6e6e" />
                    </svg>
                  </ViewLabel>
                </Viewport>
              ))}
            </Viewports>

            <CommandPanel>
              <PanelGrip />
              <PanelTabs>
                {(["create", "modify", "hierarchy", "motion", "display", "utilities"] as IconName[]).map((n) => (
                  <ToolButton key={n} aria-label={n}><Icon size={12}>{icons[n]}</Icon></ToolButton>
                ))}
              </PanelTabs>
              <NameRow>
                <NameInput aria-label="オブジェクト名" defaultValue="Surface002" />
                <ColorSwatch aria-label="オブジェクト カラー" />
              </NameRow>
              <ModifierList>
                <SelectWrap>
                  <Select aria-label="モディファイヤ リスト"><option>モディファイヤ リスト</option></Select>
                </SelectWrap>
              </ModifierList>
              <Stack>
                <StackRow><Triangle />NURBS サーフェス</StackRow>
                <StackRow $child $selected>サーフェス CV</StackRow>
                <StackRow $child>サーフェス</StackRow>
                <StackEnd />
              </Stack>
              <StackTools>
                <StackTool aria-label="スタックを固定"><Icon size={9}>{icons.pin}</Icon></StackTool>
                <Separator />
                <StackTool aria-label="最終結果を表示"><Icon size={10}>{icons.tube}</Icon></StackTool>
                <Separator />
                <StackTool aria-label="固有にする"><Icon size={11}>{icons.unique}</Icon></StackTool>
                <StackTool aria-label="モディファイヤを除去"><Icon size={10}>{icons.trash}</Icon></StackTool>
                <Separator />
                <StackTool aria-label="モディファイヤ セットを設定"><Icon size={11}>{icons.configure}</Icon></StackTool>
              </StackTools>
              <PanelDivider />
              <Rollouts>
                {["CV", "ソフト選択"].map((r) => (
                  <Rollout key={r}>
                    <svg width="3" height="4"><path d="M0 0l3 2-3 2z" fill="#ddd" /></svg>
                    {r}
                  </Rollout>
                ))}
              </Rollouts>
            </CommandPanel>
          </WorkArea>

          <TrackBar>
            <TrackButton $w={9} aria-label="前のフレーム">&lt;</TrackButton>
            <TrackButton $w={76}>0 / 100</TrackButton>
            <TrackButton $w={9} aria-label="次のフレーム">&gt;</TrackButton>
          </TrackBar>
          <Timeline>
            <CurveButton aria-label="ミニ カーブ エディタ"><Icon size={10}>{icons.track}</Icon></CurveButton>
            <Ruler><TimeRuler /></Ruler>
          </Timeline>

          <StatusBar>
            <ScriptBox>
              <ScriptInput $macro aria-label="マクロ レコーダ" />
              <ScriptInput aria-label="スクリプト ミニ リスナー" defaultValue="スクリプト ミニ リス" />
            </ScriptBox>
            <StatusMiddle>
              <StatusRow>
                <Message>1 個のオブジェクトが選択されました</Message>
                <StatusIcon aria-label="選択を分離"><Icon size={11}>{icons.isolate}</Icon></StatusIcon>
                <StatusIcon aria-label="選択をロック"><Icon size={9}>{icons.lock}</Icon></StatusIcon>
                <StatusIcon aria-label="絶対モード"><Icon size={10}>{icons.absolute}</Icon></StatusIcon>
                {[["X:", "120.274"], ["Y:", "-44.725"], ["Z:", "0.0"]].map(([axis, value]) => (
                  <Coord key={axis}>{axis}<CoordInput defaultValue={value} /></Coord>
                ))}
                <GridText>グリッド = 10.0</GridText>
              </StatusRow>
              <StatusRow $end>
                <Separator />
                <StatusIcon $boxed $w={13} aria-label="セキュリティ"><Icon size={9}>{icons.shield}</Icon></StatusIcon>
                <SmallText>有効:</SmallText>
                <GreenDot />
                <StatusIcon $boxed $w={13} aria-label="状態"><Icon size={10}>{icons.target}</Icon></StatusIcon>
                <Separator />
                <StatusIcon aria-label="タグ"><Icon size={9}>{icons.tag}</Icon></StatusIcon>
                <SmallText>時間タグを追加</SmallText>
              </StatusRow>
            </StatusMiddle>
            <Playback>
              <PlaybackRow>
                <StatusIcon $w={14} aria-label="最初へ"><Icon size={10}>{icons.first}</Icon></StatusIcon>
                <Separator />
                <StatusIcon $w={14} aria-label="前へ"><Icon size={10}>{icons.prev}</Icon></StatusIcon>
                <StatusIcon $w={14} aria-label="再生"><Icon size={12}>{icons.play}</Icon></StatusIcon>
                <StatusIcon $w={14} aria-label="次へ"><Icon size={10}>{icons.next}</Icon></StatusIcon>
                <Separator />
                <StatusIcon $w={14} aria-label="最後へ"><Icon size={10}>{icons.last}</Icon></StatusIcon>
              </PlaybackRow>
              <PlaybackRow>
                <StatusIcon $w={14} aria-label="キー モード"><Icon size={9}>{icons.keyMode}</Icon></StatusIcon>
                <Separator />
                <FrameBox>
                  <FrameInput aria-label="現在のフレーム" defaultValue="0" />
                  <svg width="3" height="7" aria-hidden="true">
                    <path d="M0 3l1.500-2.500L3 3zM0 4.500h3L1.500 7z" fill="#d8d8d8" />
                  </svg>
                </FrameBox>
                <StatusIcon $w={14} aria-label="時間設定"><Icon size={10}>{icons.timeConfig}</Icon></StatusIcon>
              </PlaybackRow>
            </Playback>
            <AddKeyButton aria-label="キーを設定"><Icon size={18}>{icons.addKey}</Icon></AddKeyButton>
            <KeyGrid>
              <KeyButton>オート キー</KeyButton>
              <KeySelect>
                <SelectWrap><Select aria-label="キー対象"><option>選択</option></Select></SelectWrap>
              </KeySelect>
              <KeyButton>セット キー</KeyButton>
              <NavButton aria-label="接線"><Icon size={11}>{icons.tangent}</Icon></NavButton>
              <KeyButton>キー フィルタ...</KeyButton>
            </KeyGrid>
            <NavGrid>
              {(["zoom", "zoomAll", "extents", "extentsAll", "fov", "pan", "orbit", "maximize"] as IconName[]).map((n) => (
                <NavButton key={n} aria-label={n}><Icon size={11}>{icons[n]}</Icon></NavButton>
              ))}
            </NavGrid>
            <ResizeGrip>
              <svg width="6" height="6"><path d="M4 0h1v1H4zM2 2h1v1H2zM4 2h1v1H4zM0 4h1v1H0zM2 4h1v1H2zM4 4h1v1H4z" fill="#bbb" /></svg>
            </ResizeGrip>
          </StatusBar>
        </AppWindow>
      </Desktop>
    </>
  );
}
